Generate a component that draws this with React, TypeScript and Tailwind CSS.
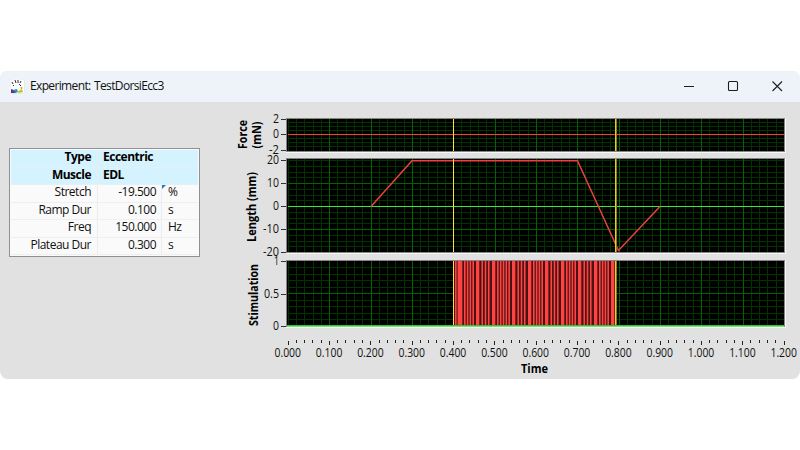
import React from "react";

const LEFT = 288;
const STEP = 41.33;

const rows = [
  { label: "Type", value: "Eccentric", unit: "", header: true },
  { label: "Muscle", value: "EDL", unit: "", header: true },
  { label: "Stretch", value: "-19.500", unit: "%", header: false },
  { label: "Ramp Dur", value: "0.100", unit: "s", header: false },
  { label: "Freq", value: "150.000", unit: "Hz", header: false },
  { label: "Plateau Dur", value: "0.300", unit: "s", header: false },
];

// places where neighbouring pulses merge into one solid bar
const merged = [459, 476, 492, 512, 528, 545, 561, 578, 594, 611];

type PlotProps = {
  top: number;
  bottom: number;
  zero: number;
  minor: number;
  majors: number[];
  children?: React.ReactNode;
};

function Plot({ top, bottom, zero, minor, majors, children }: PlotProps) {
  const lines: number[] = [];
  for (let i = -8; i <= 10; i++) {
    const y = zero - i * minor;
    if (y > top + 1 && y < bottom - 1) lines.push(Math.floor(y));
  }
  const cols = Array.from({ length: 60 }, (_, i) => i);

  return (
    <g shapeRendering="crispEdges">
      <rect x={286} y={top - 1} width={500} height={bottom - top + 3} fill="#f8f8f8" />
      <rect x={286} y={top - 1} width={499} height={bottom - top + 2} fill="#858585" />
      <rect x={287} y={top} width={497} height={bottom - top} fill="#000" />
      {lines.map((y) => (
        <rect key={y} x={288} y={y} width={496} height={1} fill="#003300" />
      ))}
      {cols.map((i) => (
        <rect
          key={i}
          x={Math.floor(LEFT + (i * STEP) / 5 + 0.4)}
          y={top}
          width={1}
          height={bottom - top}
          fill={i % 5 === 0 && i > 0 ? "#006400" : "#003300"}
        />
      ))}
      {majors.map((y) => (
        <rect key={y} x={288} y={y} width={496} height={1} fill="#006400" />
      ))}
      {children}
    </g>
  );
}

function Cursors({ top, bottom }: { top: number; bottom: number }) {
  return (
    <g shapeRendering="crispEdges">
      <rect x={453} y={top} width={1} height={bottom - top} fill="#ffe62e" />
      <rect x={615} y={top} width={1} height={bottom - top} fill="#e6cf28" />
      <rect x={616} y={top} width={1} height={bottom - top} fill="#8b7a10" />
    </g>
  );
}

function YTicks({ ticks }: { ticks: [string, number, number][] }) {
  return (
    <>
      {ticks.map(([label, y, w]) => (
        <g key={label}>
          <text x={279 - w} y={y + 4.4} textLength={w} lengthAdjust="spacingAndGlyphs">
            {label}
          </text>
          <rect x={281} y={y} width={5} height={1} fill="#333" />
        </g>
      ))}
    </>
  );
}

function Charts() {
  // a frame of 16.8px holds one merged bar and four thin ones
  const pulses = merged.flatMap((x, i) => {
    const next = merged[i + 1] ?? 615;
    const count = Math.round((next - x - 3) / 2.9) - 1;
    const gap = (next - x - 3) / (count + 1);
    return Array.from({ length: Math.max(count, 0) }, (_, k) => x + 3 + gap * (k + 1) - 0.8);
  });

  return (
    <svg
      width={800}
      height={277}
      viewBox="0 102 800 277"
      className="block font-['Open_Sans',sans-serif] text-[12px]"
      fill="#111"
    >
      <Plot top={119} bottom={151} zero={134.5} minor={4} majors={[]}>
        <rect x={288} y={134} width={496} height={1} fill="#ff3c3c" />
      </Plot>
      <Cursors top={119} bottom={151} />

      <Plot top={159} bottom={252} zero={206.5} minor={5.75} majors={[183, 229]}>
        <rect x={288} y={206} width={496} height={1} fill="#3ee63e" />
      </Plot>
      <polyline
        points="371,206.5 412,160.7 577.5,160.7 618.5,250.5 660,206.5"
        fill="none"
        stroke="#f03e3e"
        strokeWidth={1.5}
      />
      <Cursors top={159} bottom={252} />

      <Plot top={261} bottom={326} zero={326} minor={6.45} majors={[293]} />
      <rect x={454} y={261} width={161} height={65} fill="#4a1212" />
      {[455, 457.6, ...pulses].map((x) => (
        <rect key={x} x={x} y={261} width={1.6} height={65} fill="#ff4242" />
      ))}
      {merged.map((x) => (
        <rect key={x} x={x} y={261} width={3.3} height={65} fill="#ff4242" />
      ))}
      <Cursors top={261} bottom={326} />
      <g shapeRendering="crispEdges">
        <rect x={287} y={325} width={497} height={1} fill="#2fc42f" />
        <rect x={287} y={326} width={497} height={1} fill="#6fe86f" />
      </g>

      <YTicks ticks={[["2", 119, 6], ["0", 134, 6], ["-2", 150, 10]]} />
      <YTicks
        ticks={[["20", 160, 12], ["10", 183, 12], ["0", 206, 6], ["-10", 229, 16], ["-20", 252, 16]]}
      />
      <YTicks ticks={[["1", 261, 5], ["0.5", 294, 15], ["0", 326, 6]]} />

      {/* time axis */}
      <g shapeRendering="crispEdges">
        {Array.from({ length: 61 }, (_, i) => (
          <rect
            key={i}
            x={Math.round(LEFT + (i * STEP) / 5 - 0.4)}
            y={i % 5 === 0 ? 341 : 340}
            width={1}
            height={i % 5 === 0 ? 4 : 3}
            fill="#222"
          />
        ))}
      </g>
      {Array.from({ length: 13 }, (_, i) => (
        <text
          key={i}
          x={LEFT + i * STEP - 13.5}
          y={356.5}
          textLength={26.5}
          lengthAdjust="spacingAndGlyphs"
        >
          {(i / 10).toFixed(3)}
        </text>
      ))}

      <g fontWeight="bold" fill="#000">
        <text x={521} y={373} textLength={27} lengthAdjust="spacingAndGlyphs">
          Time
        </text>
        <text transform="translate(247 149) rotate(-90)" textLength={29} lengthAdjust="spacingAndGlyphs">
          Force
        </text>
        <text transform="translate(261 148.500) rotate(-90)" textLength={27} lengthAdjust="spacingAndGlyphs">
          (mN)
        </text>
        <text transform="translate(256 242) rotate(-90)" textLength={70} lengthAdjust="spacingAndGlyphs">
          Length (mm)
        </text>
        <text transform="translate(258 326) rotate(-90)" textLength={62} lengthAdjust="spacingAndGlyphs">
          Stimulation
        </text>
      </g>
    </svg>
  );
}

function ParamTable() {
  return (
    <div className="absolute left-[9px] top-[46px] h-[109px] w-[191px] border border-[#8d9197] bg-[#fafafa] p-px font-['Open_Sans',sans-serif] text-[12px] tracking-[-0.5px] text-[#111]">
      {rows.map((row) => (
        <div
          key={row.label}
          className={`flex h-[17.5px] items-center border-b ${
            row.header
              ? "border-[#e3f0f5] bg-[#d5f3ff] font-bold text-black"
              : "border-[#efefef]"
          }`}
        >
          <div className="h-full w-[87px] border-r border-[#ececec] pr-[6px] text-right leading-[13.5px]">
            {row.label}
          </div>
          <div
            className={`h-full w-[64px] leading-[13.5px] ${
              row.header ? "pl-[5px]" : "border-r border-[#ececec] pr-[5px] text-right"
            }`}
          >
            {row.value}
          </div>
          <div className="h-full pl-[6px] leading-[13.5px]">{row.unit}</div>
        </div>
      ))}
      <svg className="absolute left-[152px] top-[36px]" width="4" height="4">
        <path d="M0 0H4L0 4Z" fill="#2679c9" />
      </svg>
    </div>
  );
}

function TitleBar() {
  return (
    <div className="flex h-[31px] items-center bg-[#eef3f9] pl-[10px] pr-[16px]">
      <svg className="mb-px" width="15" height="15" viewBox="0 0 15 15">
        <rect width="14.500" height="14.500" rx="2" fill="#fdfdfd" stroke="#ddd" strokeWidth=".5" />
        <path d="M2 3l1 2M5 1l1 3M8 1v3M11 2l-1 2M3 6l1 1M9 5l2 2" stroke="#333" strokeWidth="1" />
        <path d="M1 10l5 2v2H1z" fill="#6a2c91" />
        <path d="M3 11l4-1 1 3-3 1z" fill="#159bb5" />
        <path d="M7 13l5-3 1 3-4 1z" fill="#b9c929" />
        <circle cx="11.500" cy="9" r="1" fill="#f08428" />
      </svg>
      <span className="mb-[2px] ml-[5px] font-['Open_Sans',sans-serif] text-[12px] tracking-[-0.64px] text-[#111] [word-spacing:1px]">
        Experiment: TestDorsiEcc3
      </span>
      <svg className="mb-[2px] ml-auto" width="101" height="12" fill="none" stroke="#1e1e1e" strokeWidth="1.100">
        <path d="M1 6.500H11" />
        <rect x="45.500" y="1.500" width="9" height="9" rx="1" />
        <path d="M89.500 1.500l9.500 9.500M99 1.500l-9.500 9.500" />
      </svg>
    </div>
  );
}

function App() {
  return (
    <div className="h-[450px] w-[800px] overflow-hidden bg-white pt-[71px]">
      <div className="relative h-[308px] overflow-hidden rounded-lg bg-[#e1e1e1]">
        <TitleBar />
        <div className="relative">
          <Charts />
          <ParamTable />
        </div>
      </div>
    </div>
  );
}

export default App;
